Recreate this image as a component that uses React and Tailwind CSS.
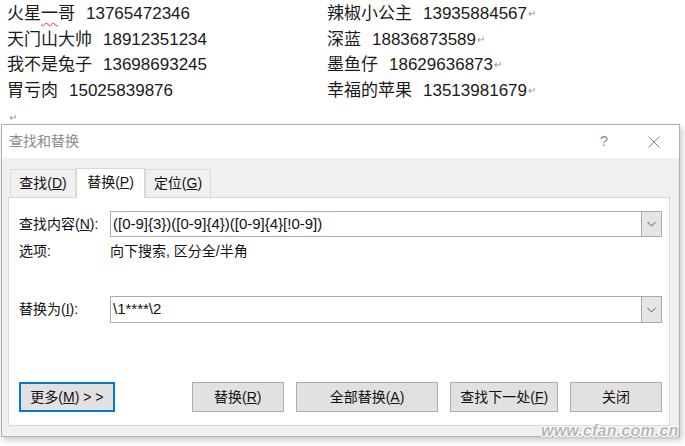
import React from 'react'

const font = { fontFamily: '"Liberation Sans", "Noto Sans CJK SC", sans-serif' }

const contacts = [
    ['火星一哥', '13765472346', '辣椒小公主', '13935884567'],
    ['天门山大帅', '18912351234', '深蓝', '18836873589'],
    ['我不是兔子', '13698693245', '墨鱼仔', '18629636873'],
    ['胃亏肉', '15025839876', '幸福的苹果', '13513981679'],
]

const btnBase = "h-[30px] flex items-center justify-center bg-[#e1e1e1] text-[14px] text-[#111]"
const btnClass = `${btnBase} border border-[#adadad]`
const inputClass = "flex h-full flex-1 items-center bg-white border border-[#ababab] pl-[2px] text-[15px] text-[#111]"

function Name({ name }) {
    if (name === '火星一哥') {
        return (
            <span>火星<span className="underline decoration-wavy decoration-red-500 decoration-1 underline-offset-[3px]">一</span>哥</span>
        )
    }
    return <span>{name}</span>
}

function Mark() {
    return <span className="text-[10px] text-[#999] ml-[1px] align-middle">↵</span>
}

function Combo({ value, h }) {
    return (
        <div className={`flex ${h} ml-auto w-[552px]`}>
            <div className={inputClass}>{value}</div>
            <div className="flex h-full w-[20px] items-center justify-center bg-[#e5e5e5] border border-l-0 border-[#ababab]">
                <svg width="9" height="6" viewBox="0 0 9 6" fill="none" stroke="#555" strokeWidth="1">
                    <path d="M0.5 1l4 4 4-4" />
                </svg>
            </div>
        </div>
    )
}

export default function App() {
    return (
        <div className="relative w-[685px] h-[446px] bg-white overflow-hidden" style={font}>
            <div className="pl-[7px] pt-[1px] text-[17px] leading-[25.5px] text-[#1a1a1a]">
                {contacts.map(([n1, p1, n2, p2]) => (
                    <div key={p1} className="grid grid-cols-[320px_auto]">
                        <div className="flex">
                            <Name name={n1} />
                            <span className="ml-[11px]">{p1}</span>
                        </div>
                        <div className="flex items-center">
                            <span>{n2}</span>
                            <span className="ml-[11px]">{p2}</span>
                            <Mark />
                        </div>
                    </div>
                ))}
                <div className="h-[21px] flex items-end pl-[2px] text-[10px] leading-[12px] text-[#999]">↵</div>
            </div>

            <div className="ml-[1px] w-[679px] h-[313px] flex flex-col border border-[#b0b0b0] bg-[#f0f0f0] shadow-[2px_3px_6px_rgba(0,0,0,0.22)]">
                <div className="h-[33px] flex items-center bg-white pl-[7px] text-[14px] text-[#8c8c8c]">
                    <span>查找和替换</span>
                    <span className="ml-auto mr-[40px] text-[15px] text-[#8a8a8a]">?</span>
                    <svg className="mr-[19px]" width="12" height="12" viewBox="0 0 12 12" stroke="#8a8a8a" strokeWidth="1">
                        <path d="M0.5 0.5l11 11M11.5 0.5l-11 11" />
                    </svg>
                </div>

                <div className="flex items-end pt-[10px] pl-[8px] text-[14px] text-[#111]">
                    <div className="w-[66px] h-[28px] flex items-center justify-center border border-b-0 border-[#d9d9d9] bg-[#f0f0f0]">
                        查找(<u>D</u>)
                    </div>
                    <div className="w-[69px] h-[30px] flex items-center justify-center border border-b-0 border-[#d9d9d9] bg-white relative z-10 -mb-[1px] pb-[2px]">
                        替换(<u>P</u>)
                    </div>
                    <div className="w-[66px] h-[28px] flex items-center justify-center border border-b-0 border-[#d9d9d9] bg-[#f0f0f0]">
                        定位(<u>G</u>)
                    </div>
                </div>

                <div className="ml-[6px] w-[662px] h-[229px] flex flex-col bg-white border border-[#d9d9d9] pl-[10px] pr-[7px] pt-[13px] text-[14px] text-[#111]">
                    <div className="flex items-center h-[26px]">
                        <span>查找内容(<u>N</u>):</span>
                        <Combo value="([0-9]{3})([0-9]{4})([0-9]{4}[!0-9])" h="h-[26px]" />
                    </div>
                    <div className="flex items-center h-[20px] mt-[4px]">
                        <span className="w-[91px]">选项:</span>
                        <span>向下搜索, 区分全/半角</span>
                    </div>
                    <div className="flex items-center h-[27px] mt-[35px]">
                        <span>替换为(<u>I</u>):</span>
                        <Combo value="\1****\2" h="h-[27px]" />
                    </div>
                    <div className="flex mt-[59px]">
                        <div className={`${btnBase} w-[96px] border-2 border-[#0078d7]`}>
                            更多(<u>M</u>)&nbsp;&gt; &gt;
                        </div>
                        <div className={`${btnClass} w-[92px] ml-[77px]`}>替换(<u>R</u>)</div>
                        <div className={`${btnClass} w-[143px] ml-[12px]`}>全部替换(<u>A</u>)</div>
                        <div className={`${btnClass} w-[108px] ml-[12px]`}>查找下一处(<u>F</u>)</div>
                        <div className={`${btnClass} w-[92px] ml-[12px]`}>关闭</div>
                    </div>
                </div>
            </div>

            <div
                className="absolute left-[541px] top-[421px] text-[16px] font-bold italic leading-[20px] text-[#b8b8b8] tracking-[0.2px]"
                style={{ ...font, textShadow: '1px 1px 0 #fff, -1px -1px 0 #fff, 1px -1px 0 #fff, -1px 1px 0 #fff, 1px 1px 2px rgba(0,0,0,0.35)' }}
            >
                www.cfan.com.cn
            </div>
        </div>
    )
}
